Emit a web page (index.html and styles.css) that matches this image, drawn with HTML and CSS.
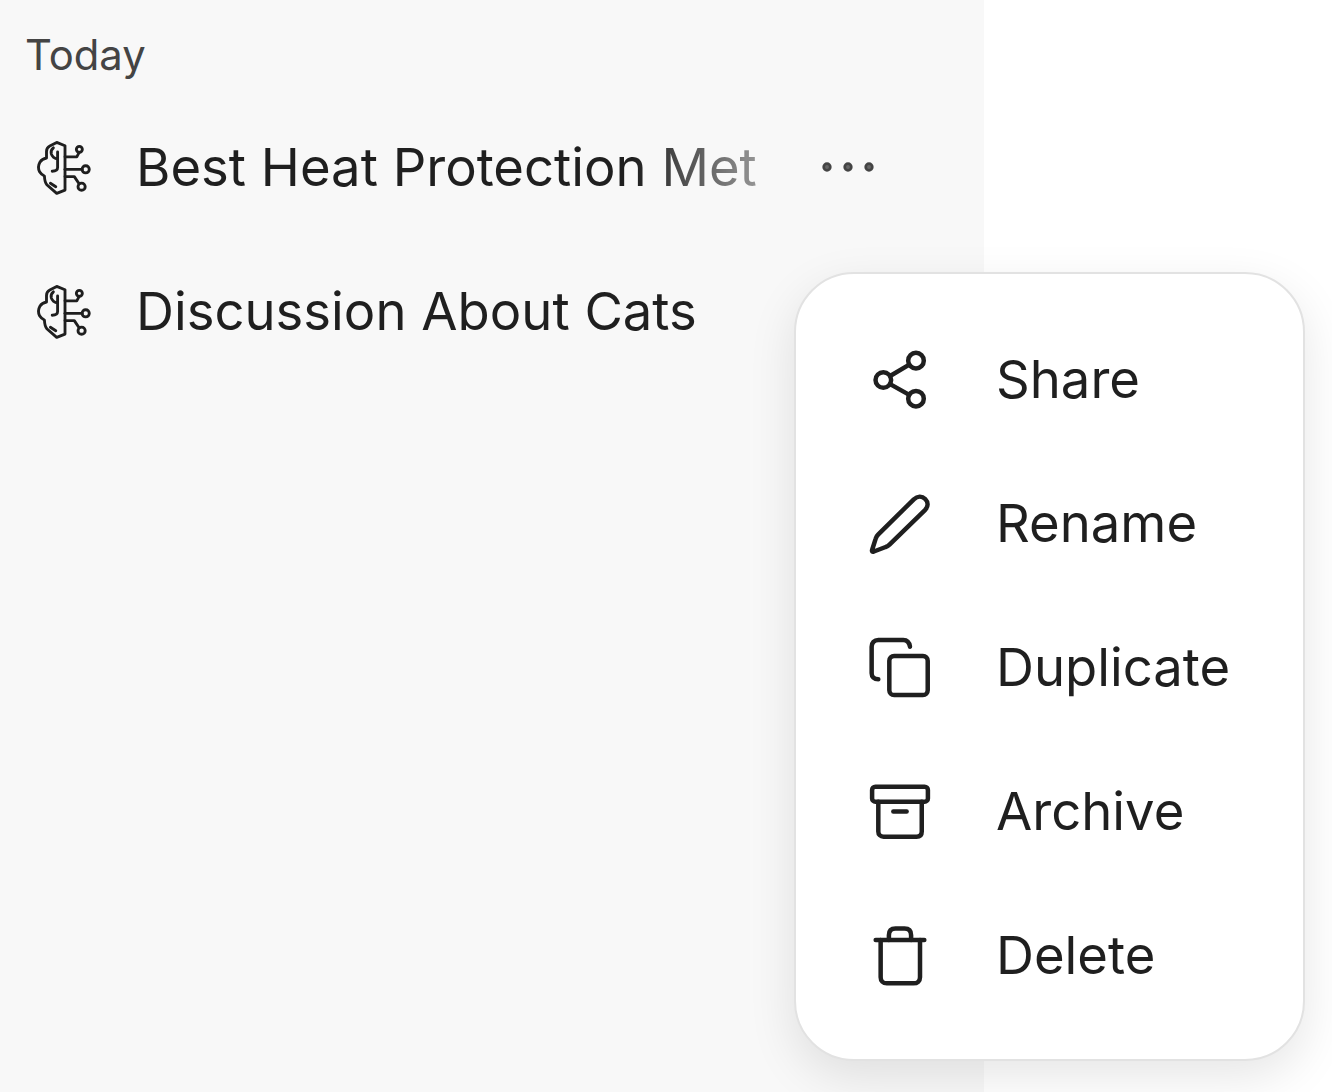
FILE: index.html
```html
<!DOCTYPE html>
<html lang="en">
<head>
<meta charset="utf-8">
<title>Chats</title>
<link rel="stylesheet" href="styles.css">
</head>
<body>
<div class="page">
  <aside class="sidebar">
    <div class="section-title">Today</div>
    <div class="chat-row">
      <svg class="icon brain" viewBox="0 0 24 24"><path d="M12.67 4.9 9.9 3.8 7.6 5Q6.5 5.6 6.5 6.8V9Q5 9.3 4.3 10.4 3.4 12 4.2 13.6 4.8 14.6 5.8 15 5.9 17 6.6 17.9L9.9 20.8 12.67 19.7Z"/><path d="M8.8 5.6Q7.8 6.4 8.1 7.6 8.5 8.9 10.2 9.4M10.2 7V12.2Q10.2 13.4 8.4 13.4M7.8 17.4 9.6 18.6"/><path d="M12.67 8.6H16.6L17.4 7.1"/><circle cx="17.45" cy="6.11" r="1"/><path d="M12.67 12.78h5.7"/><circle cx="19.56" cy="12.78" r="1.2"/><path d="M12.67 15.2h3.1l1.6 2.4"/><circle cx="18.2" cy="18.56" r="1.2"/></svg>
      <span class="chat-title fade">Best Heat Protection Met</span>
      <svg class="icon dots" viewBox="0 0 24 24"><circle cx="5" cy="12" r="1.1"/><circle cx="12" cy="12" r="1.1"/><circle cx="19" cy="12" r="1.1"/></svg>
    </div>
    <div class="chat-row">
      <svg class="icon brain" viewBox="0 0 24 24"><path d="M12.67 4.9 9.9 3.8 7.6 5Q6.5 5.6 6.5 6.8V9Q5 9.3 4.3 10.4 3.4 12 4.2 13.6 4.8 14.6 5.8 15 5.9 17 6.6 17.9L9.9 20.8 12.67 19.7Z"/><path d="M8.8 5.6Q7.8 6.4 8.1 7.6 8.5 8.9 10.2 9.4M10.2 7V12.2Q10.2 13.4 8.4 13.4M7.8 17.4 9.6 18.6"/><path d="M12.67 8.6H16.6L17.4 7.1"/><circle cx="17.45" cy="6.11" r="1"/><path d="M12.67 12.78h5.7"/><circle cx="19.56" cy="12.78" r="1.2"/><path d="M12.67 15.2h3.1l1.6 2.4"/><circle cx="18.2" cy="18.56" r="1.2"/></svg>
      <span class="chat-title">Discussion About Cats</span>
    </div>
  </aside>
  <div class="menu">
    <div class="menu-item">
      <svg class="icon action" viewBox="0 0 24 24"><circle cx="6.44" cy="12.33" r="2.6"/><circle cx="17.33" cy="5.89" r="2.6"/><circle cx="17.33" cy="18.56" r="2.6"/><path d="M8.7 11 15.1 7.2M8.7 13.7l6.4 3.6"/></svg>
      <span>Share</span>
    </div>
    <div class="menu-item">
      <svg class="icon action" viewBox="0 0 24 24"><path d="M2.7 21 3.9 17.2Q4.1 16.5 4.7 15.9L16.6 4.1C17.8 3 19.3 2.9 20.4 4 21.5 5.1 21.4 6.5 20.4 7.6L8.5 19.2Q7.9 19.8 7.2 20L3.3 21.5Q2.5 21.7 2.7 21Z"/></svg>
      <span>Rename</span>
    </div>
    <div class="menu-item">
      <svg class="icon action" viewBox="0 0 24 24"><rect x="8.44" y="8.33" width="12.8" height="13" rx="1.6"/><path d="M15.33 5.22C15.1 3.8 14.3 3 13.1 3H4.77C3.4 3 2.55 3.9 2.55 5.22V14.1c0 1.2.8 2 2.22 2"/></svg>
      <span>Duplicate</span>
    </div>
    <div class="menu-item">
      <svg class="icon action" viewBox="0 0 24 24"><rect x="2.7" y="3.9" width="18.6" height="5" rx="1.1"/><path d="M4.77 8.9V18.8c0 1.1.7 1.75 1.75 1.75H17.5c1.1 0 1.75-.65 1.75-1.75V8.9"/><path d="M9.77 12.2h4.43"/></svg>
      <span>Archive</span>
    </div>
    <div class="menu-item">
      <svg class="icon action" viewBox="0 0 24 24"><path d="M3.9 7H20.1"/><path d="M5.55 7V19.4c0 1.3.8 2.04 2.05 2.04h8.9c1.3 0 2.17-.74 2.17-2.04V7"/><path d="M8.3 7V5.4c0-1.4.8-2.2 2.2-2.2h3c1.4 0 2.2.8 2.2 2.2V7"/></svg>
      <span>Delete</span>
    </div>
  </div>
</div>
</body>
</html>
```
FILE: styles.css
```css
* { box-sizing: border-box; }
html, body { margin: 0; height: 100%; background: #fff; }
body { font-family: Inter, "Liberation Sans", sans-serif; color: #1f1f1f; overflow: hidden; }
.page { position: relative; width: 1332px; height: 1092px; display: flex; }
.sidebar { width: 984px; height: 100%; background: #f8f8f8; padding: 24px 0 0 25px; }
.section-title { font-size: 41.8px; line-height: 62px; color: #444; margin-bottom: 9px; }
.chat-row { display: flex; align-items: center; height: 144px; margin-left: 2px; gap: 37px; }
.chat-title { font-size: 52.6px; line-height: 60px; white-space: nowrap; width: 622px; }
.fade {
  -webkit-mask-image: linear-gradient(to right, #000 80%, rgba(0,0,0,.45) 100%);
  mask-image: linear-gradient(to right, #000 80%, rgba(0,0,0,.45) 100%);
}
.icon { width: 72px; height: 72px; flex: none; fill: none; stroke: #1f1f1f; stroke-linecap: round; stroke-linejoin: round; }
.brain { stroke-width: .95; }
.dots { stroke: #444; fill: #666; stroke-width: .9; margin-left: 17px; }
.action { stroke-width: 1.5; }
.menu {
  position: absolute;
  left: 794px;
  top: 272px;
  width: 511px;
  height: 789px;
  background: #fff;
  border: 2px solid #e2e2e2;
  border-radius: 60px;
  padding: 33px 0 0 68px;
  box-shadow: 0 16px 48px rgba(0,0,0,.1);
}
.menu-item { display: flex; align-items: center; gap: 60px; height: 144px; font-size: 52.6px; }
```
